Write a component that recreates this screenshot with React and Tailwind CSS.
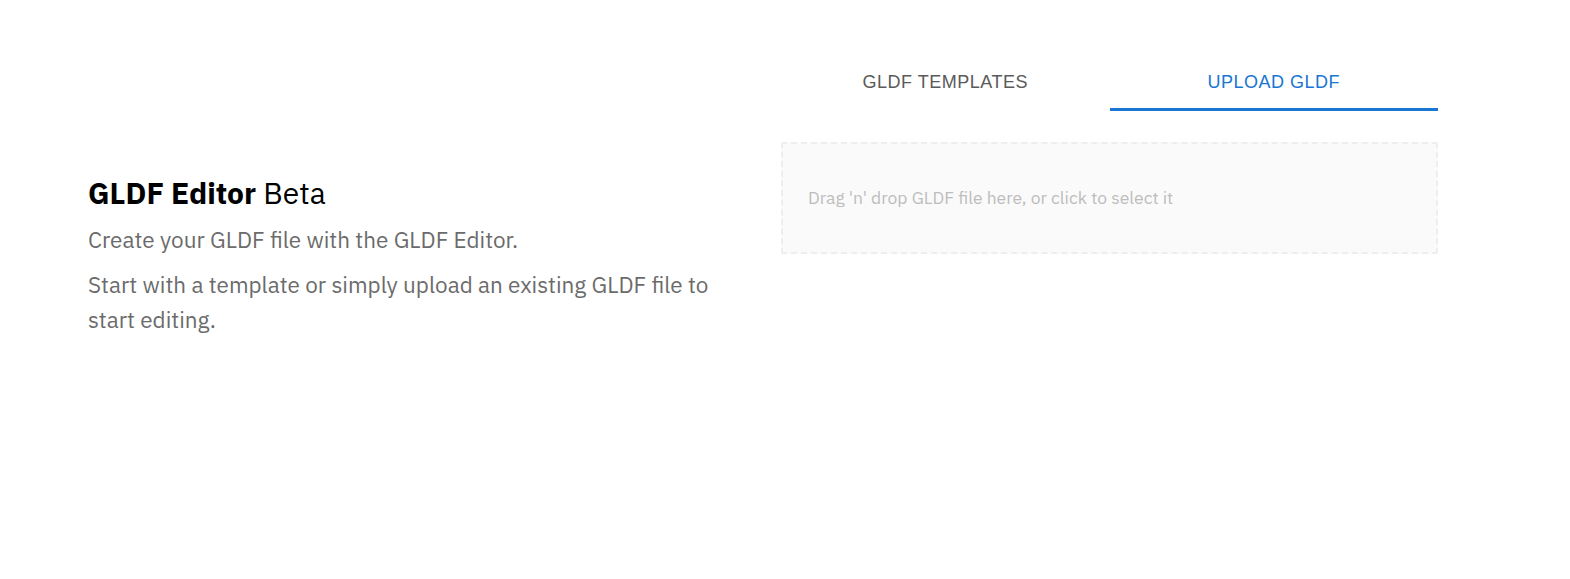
import React, { useState } from 'react'

const plex = { fontFamily: '"IBM Plex Sans", Inter, "Noto Sans", sans-serif' }

export default function App() {
  const [tab, setTab] = useState(1)

  return (
    <div className="w-[1570px] h-[579px] bg-white flex pl-[88px] pt-[51px]" style={plex}>
      <div className="w-[693px] shrink-0 pt-[124px] pr-[40px]">
        <h1 className="text-[30px] leading-[36px] text-black">
          <span className="font-bold">GLDF Editor</span> Beta
        </h1>
        <p className="mt-[11px] text-[22.5px] leading-[35px] text-[#6b6b6b]">Create your GLDF file with the GLDF Editor.</p>
        <p className="mt-[10px] text-[22.5px] leading-[35px] text-[#6b6b6b]">
          Start with a template or simply upload an existing GLDF file to start editing.
        </p>
      </div>

      <div className="w-[657px] shrink-0">
        <div className="flex">
          {['GLDF Templates', 'Upload GLDF'].map((label, i) => (
            <button
              key={label}
              onClick={() => setTab(i)}
              className={
                'flex-1 h-[60px] relative uppercase text-[18px] tracking-[0.5px] ' +
                (tab === i ? 'text-[#1976d2]' : 'text-[#5a5a5a]')
              }
              style={{ fontFamily: '"Liberation Sans", Arial, sans-serif' }}
            >
              <span className="relative top-[1px]">{label}</span>
              {tab === i && <span className="absolute left-0 right-0 bottom-0 h-[3px] bg-[#1976d2]" />}
            </button>
          ))}
        </div>

        <div className="mt-[31px] h-[112px] flex items-center px-[25px] bg-[#fafafa] border-2 border-dashed border-[#eeeeee] rounded-[2px] text-[#bdbdbd] text-[17.5px] cursor-pointer">
          Drag 'n' drop GLDF file here, or click to select it
        </div>
      </div>
    </div>
  )
}
